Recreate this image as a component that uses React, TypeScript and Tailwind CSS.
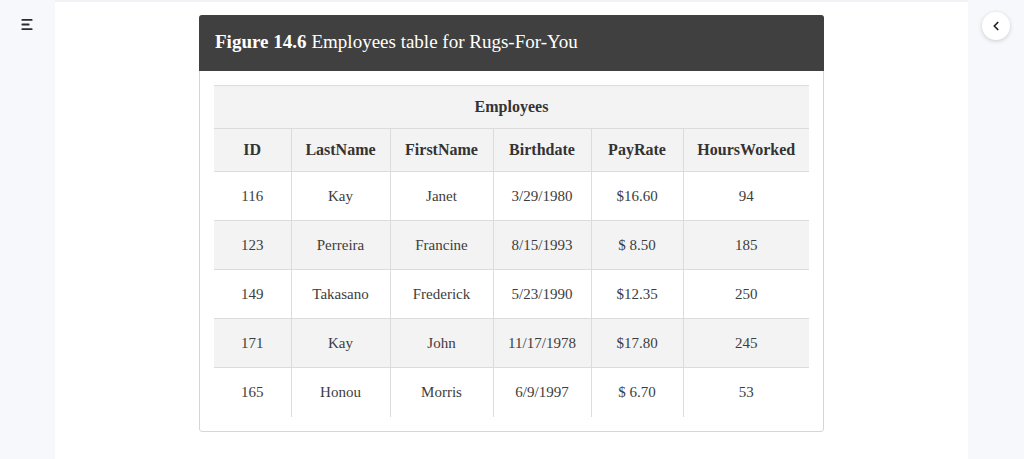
import { ChevronLeft } from 'lucide-react';

const rows = [
  ['116', 'Kay', 'Janet', '3/29/1980', '$16.60', '94'],
  ['123', 'Perreira', 'Francine', '8/15/1993', '$ 8.50', '185'],
  ['149', 'Takasano', 'Frederick', '5/23/1990', '$12.35', '250'],
  ['171', 'Kay', 'John', '11/17/1978', '$17.80', '245'],
  ['165', 'Honou', 'Morris', '6/9/1997', '$ 6.70', '53'],
];

const cols = ['ID', 'LastName', 'FirstName', 'Birthdate', 'PayRate', 'HoursWorked'];
const widths = ['w-[77px]', 'w-[99px]', 'w-[103px]', 'w-[98px]', 'w-[92px]', 'w-[126px]'];

export default function App() {
  return (
    <div className="flex h-[459px] w-[1024px] overflow-hidden bg-white font-['Liberation_Serif',serif] text-[#333]">
      {/* Left rail */}
      <aside className="w-[55px] shrink-0 bg-[#f7f8fb] pt-[18px] pl-[21px]">
        <svg width="13" height="13" viewBox="0 0 13 13" className="text-[#2b2b2b]">
          <rect x="0.5" y="1" width="11" height="1.8" rx="0.6" fill="currentColor" />
          <rect x="0.5" y="5.6" width="8" height="1.8" rx="0.6" fill="currentColor" />
          <rect x="0.5" y="10.2" width="11" height="1.8" rx="0.6" fill="currentColor" />
        </svg>
      </aside>

      {/* Main */}
      <main className="flex-1 border-t-2 border-[#f0f1f4] pt-[13px]">
        <div className="mx-auto w-[625px] rounded-[3px] border border-[#d6d6d6] bg-white">
          <div className="-mx-px -mt-px flex h-[56px] items-center rounded-t-[3px] bg-[#404040] px-[16px] pb-[1px] text-[19px] text-white">
            <span className="font-bold">Figure 14.6</span>
            <span className="ml-[5px]">Employees table for Rugs-For-You</span>
          </div>
          <div className="p-[14px]">
            <table className="w-full border-collapse text-center text-[15px] text-[#3d3d3d]">
              <thead>
                <tr>
                  <th
                    colSpan={6}
                    className="h-[43px] border-t border-b border-[#dcdcdc] bg-[#f3f3f3] text-[16px] font-bold text-[#333]"
                  >
                    Employees
                  </th>
                </tr>
                <tr className="bg-[#f3f3f3]">
                  {cols.map((c, i) => (
                    <th
                      key={c}
                      className={`h-[43px] border-b border-[#dcdcdc] text-[16px] font-bold text-[#333] ${widths[i]} ${
                        i > 0 ? 'border-l' : ''
                      }`}
                    >
                      {c}
                    </th>
                  ))}
                </tr>
              </thead>
              <tbody>
                {rows.map((r, ri) => (
                  <tr
                    key={ri}
                    className={`${ri % 2 === 1 ? 'bg-[#f3f3f3]' : 'bg-white'} ${
                      ri < rows.length - 1 ? 'border-b border-[#dcdcdc]' : ''
                    }`}
                  >
                    {r.map((v, ci) => (
                      <td
                        key={ci}
                        className={`h-[49px] ${ci > 0 ? 'border-l border-[#dcdcdc]' : ''}`}
                      >
                        {v}
                      </td>
                    ))}
                  </tr>
                ))}
              </tbody>
            </table>
          </div>
        </div>
      </main>

      {/* Right rail */}
      <aside className="w-[56px] shrink-0 bg-[#f7f8fb] pt-[12px] pl-[14px]">
        <button className="flex h-[28px] w-[28px] items-center justify-center rounded-full bg-white text-[#222] shadow-[0_1px_4px_rgba(0,0,0,0.18)]">
          <ChevronLeft size={14} strokeWidth={3} />
        </button>
      </aside>
    </div>
  );
}
